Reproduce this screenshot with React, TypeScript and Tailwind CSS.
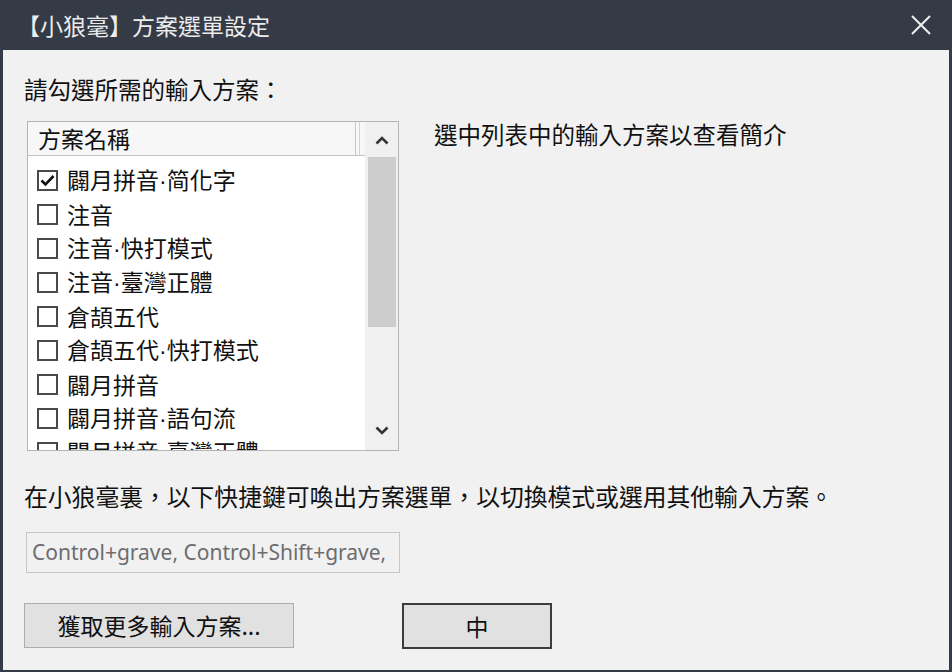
import React from "react";

const items: { label: string; checked: boolean }[] = [
  { label: "闢月拼音·简化字", checked: true },
  { label: "注音", checked: false },
  { label: "注音·快打模式", checked: false },
  { label: "注音·臺灣正體", checked: false },
  { label: "倉頡五代", checked: false },
  { label: "倉頡五代·快打模式", checked: false },
  { label: "闢月拼音", checked: false },
  { label: "闢月拼音·語句流", checked: false },
  { label: "闢月拼音·臺灣正體", checked: false },
];

function Checkbox({ checked }: { checked: boolean }) {
  return (
    <div className="w-[21px] h-[21px] border-2 border-[#4a4a4a] bg-white flex items-center justify-center shrink-0">
      {checked && (
        <svg width="15" height="13" viewBox="0 0 15 13">
          <path d="M1.5 6.5 L5.5 10.5 L13.5 2" fill="none" stroke="#111" strokeWidth="2.6" />
        </svg>
      )}
    </div>
  );
}

function Label({ text }: { text: string }) {
  const parts = text.split("·");
  return (
    <span className="text-[23px] leading-none whitespace-nowrap">
      {parts.map((p, i) => (
        <React.Fragment key={i}>
          {i > 0 && (
            <span style={{ fontFamily: '"Liberation Sans", sans-serif' }}>·</span>
          )}
          {p}
        </React.Fragment>
      ))}
    </span>
  );
}

export default function App() {
  const cjk = { fontFamily: '"Noto Sans CJK TC", "Noto Sans CJK SC", sans-serif' };
  return (
    <div className="w-[952px] h-[672px] bg-[#343a46] flex flex-col" style={cjk}>
      <div className="h-[50px] flex items-center justify-between pl-[17px] pr-[20px] shrink-0">
        <span className="text-[23px] leading-none text-[#ececec]">【小狼毫】方案選單設定</span>
        <svg width="22" height="22" viewBox="0 0 22 22">
          <path d="M2 2 L20 20 M20 2 L2 20" stroke="#f0f0f0" strokeWidth="2" />
        </svg>
      </div>
      <div className="flex-1 bg-[#f1f1f2] ml-[3px] mr-[3px] mb-[2px] flex flex-col pl-[21px] text-[#111]">
        <div className="mt-[27px] text-[23.5px] leading-[24px] whitespace-nowrap">請勾選所需的輸入方案：</div>
        <div className="mt-[20px] flex">
          <div className="ml-[3px] w-[372px] h-[330px] border border-[#b4b4b4] bg-white flex overflow-hidden">
            <div className="flex-1 flex flex-col overflow-hidden">
              <div className="h-[34px] shrink-0 flex bg-[#f7f7f7] border-b border-[#c2c2c2]">
                <div className="w-[328px] flex items-center pl-[10px] text-[23px] leading-none border-r border-[#c8c8c8]">
                  方案名稱
                </div>
                <div className="w-[4px] border-r border-[#d4d4d4]" />
              </div>
              <div className="flex flex-col pt-[7px]">
                {items.map((it) => (
                  <div key={it.label} className="h-[34px] shrink-0 flex items-center pl-[9px] gap-[9px]">
                    <Checkbox checked={it.checked} />
                    <Label text={it.label} />
                  </div>
                ))}
              </div>
            </div>
            <div className="w-[33px] shrink-0 bg-[#f0f0f0] flex flex-col items-center">
              <div className="h-[35px] flex items-center justify-center">
                <svg width="14" height="10" viewBox="0 0 14 10">
                  <path d="M1.5 8.5 L7 3 L12.5 8.5" fill="none" stroke="#333" strokeWidth="2.6" />
                </svg>
              </div>
              <div className="w-[28px] h-[170px] bg-[#cdcdcd]" />
              <div className="flex-1" />
              <div className="h-[38px] flex items-center justify-center">
                <svg width="14" height="10" viewBox="0 0 14 10">
                  <path d="M1.5 1.5 L7 7 L12.5 1.5" fill="none" stroke="#333" strokeWidth="2.6" />
                </svg>
              </div>
            </div>
          </div>
          <div className="ml-[35px] mt-[1px] text-[23.5px] leading-[24px] whitespace-nowrap">選中列表中的輸入方案以查看簡介</div>
        </div>
        <div className="mt-[33px] text-[23.8px] leading-[24px] whitespace-nowrap">
          在小狼毫裏，以下快捷鍵可喚出方案選單，以切換模式或選用其他輸入方案。
        </div>
        <div
          className="mt-[24px] ml-[2px] w-[374px] h-[41px] border border-[#c6c6c6] flex items-center pl-[5px] text-[21px] text-[#6d6d6d] whitespace-nowrap overflow-hidden"
          style={{ fontFamily: '"Noto Sans", "Open Sans", sans-serif' }}
        >
          Control+grave, Control+Shift+grave,
        </div>
        <div className="mt-[30px] flex">
          <div className="w-[270px] h-[45px] bg-[#e1e1e1] border border-[#adadad] flex items-center justify-center text-[23px]">
            獲取更多輸入方案...
          </div>
          <div className="ml-[108px] w-[150px] h-[46px] bg-[#e1e1e1] border-2 border-[#3c3c3c] flex items-center justify-center text-[23px]">
            中
          </div>
        </div>
      </div>
    </div>
  );
}
